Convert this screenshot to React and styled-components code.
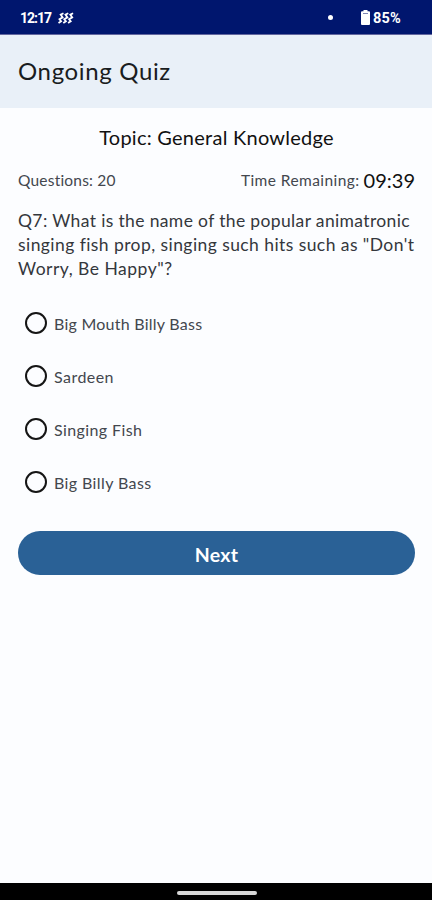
import React, { useState } from 'react';
import styled, { createGlobalStyle } from 'styled-components';

const GlobalStyle = createGlobalStyle`
    *{
        box-sizing:border-box;
    }
    body{
        margin:0;
        background:#fcfdff;
    }
`;

const Screen = styled.div`
    display:flex;
    flex-direction:column;
    width:432px;
    height:900px;
    background:#fcfdff;
    color:#191c20;
    font-family:Lato, "Open Sans", sans-serif;
    overflow:hidden;
`;

const StatusBar = styled.div`
    display:flex;
    align-items:center;
    flex:none;
    height:35px;
    padding:1px 31px 0 20px;
    background:#00166e;
    border-bottom:1px solid #63679f;
    color:#fff;
    font-family:Roboto, sans-serif;
    font-size:14px;
    font-weight:700;
`;

const Clock = styled.span`
    margin-right:7px;
    letter-spacing:-1px;
`;

const Dot = styled.span`
    width:5px;
    height:5px;
    margin-left:auto;
    margin-right:28px;
    border-radius:50%;
    background:#fff;
`;

const Percent = styled.span`
    margin-left:3px;
    padding-top:1px;
    font-size:14.5px;
    letter-spacing:0.2px;
`;

const Header = styled.header`
    display:flex;
    align-items:center;
    flex:none;
    height:73px;
    padding:0 18px 2px;
    background:#e9f0f8;
`;

const Title = styled.h1`
    margin:0;
    font-size:24px;
    font-weight:400;
    line-height:32px;
    letter-spacing:0.65px;
`;

const Content = styled.main`
    display:flex;
    flex-direction:column;
    flex:1;
    padding:15px 17px 0 18px;
`;

const Topic = styled.h2`
    margin:0;
    color:#111;
    font-size:20px;
    font-weight:400;
    line-height:28px;
    letter-spacing:0.25px;
    text-align:center;
`;

const Info = styled.div`
    display:flex;
    justify-content:space-between;
    align-items:center;
    height:28px;
    margin-top:15px;
`;

const Label = styled.span`
    color:#43474e;
    font-size:${props => props.$size || '16px'};
    line-height:24px;
    letter-spacing:${props => props.$spacing};
    white-space:pre;
`;

const Timer = styled.span`
    margin-left:4px;
    color:#111;
    font-size:20px;
    line-height:24px;
`;

const Remaining = styled.div`
    display:flex;
    align-items:center;
`;

const Question = styled.p`
    margin:15px 0 0;
    color:#34373c;
    font-size:17.5px;
    line-height:24px;
    white-space:nowrap;
`;

const Line = styled.span`
    display:block;
    letter-spacing:${props => props.$spacing};
`;

const Options = styled.div`
    display:flex;
    flex-direction:column;
    margin-top:16px;
`;

const Option = styled.label`
    display:flex;
    align-items:center;
    height:53px;
    padding-left:7px;
    cursor:pointer;
`;

const Radio = styled.input`
    appearance:none;
    width:22px;
    height:22px;
    margin:0 7px 1px 0;
    border:2px solid #151515;
    border-radius:50%;

    &:checked{
        box-shadow:inset 0 0 0 4px #fcfdff;
        background:#286196;
    }
`;

const NextButton = styled.button`
    height:44px;
    margin-top:22px;
    padding:2px 0 0;
    border:none;
    border-radius:22px;
    background:#2a6196;
    color:#fff;
    font-family:inherit;
    font-size:19.5px;
    font-weight:700;
    letter-spacing:0.3px;
`;

const NavBar = styled.div`
    display:flex;
    justify-content:center;
    align-items:center;
    flex:none;
    height:17px;
    background:#000;
`;

const Handle = styled.div`
    width:80px;
    height:4px;
    margin:2px 0 0 1px;
    border-radius:2px;
    background:#d8d8d8;
`;

const lines = [
    { text: 'Q7: What is the name of the popular animatronic', spacing: '0.36px' },
    { text: 'singing fish prop, singing such hits such as "Don\'t', spacing: '0.43px' },
    { text: 'Worry, Be Happy"?', spacing: '0.5px' },
];

const answers = [
    { text: 'Big Mouth Billy Bass', spacing: '0.25px' },
    { text: 'Sardeen', spacing: '0.45px' },
    { text: 'Singing Fish', spacing: '0.4px' },
    { text: 'Big Billy Bass', spacing: '0.4px' },
];

function WavesIcon() {
    return (
        <svg width="16" height="12" viewBox="0 0 16 12" fill="none" stroke="#fff" strokeWidth="1.8">
            <path d="M5.5 1.2 2.7 2.6 4.6 5.4 1.5 7.2 3.1 9.2 .5 11" />
            <path d="M10.3 1.2 7.5 2.6 9.4 5.4 6.3 7.2 7.9 9.2 5.3 11" />
            <path d="M15.1 1.2 12.3 2.6 14.2 5.4 11.1 7.2 12.7 9.2 10.1 11" />
        </svg>
    );
}

function BatteryIcon() {
    return (
        <svg width="9" height="15" viewBox="0 0 9 15">
            <path d="M2.5 0h4v1.2H8a1 1 0 0 1 1 1V14a1 1 0 0 1-1 1H1a1 1 0 0 1-1-1V2.2a1 1 0 0 1 1-1h1.5z" fill="#fff" />
            <path d="M2 3.5h5" stroke="#7d86b5" />
        </svg>
    );
}

export default function App() {
    const [selected, setSelected] = useState(null);

    return (
        <Screen>
            <GlobalStyle />
            <StatusBar>
                <Clock>12:17</Clock>
                <WavesIcon />
                <Dot />
                <BatteryIcon />
                <Percent>85%</Percent>
            </StatusBar>
            <Header>
                <Title>Ongoing Quiz</Title>
            </Header>
            <Content>
                <Topic>Topic: General Knowledge</Topic>
                <Info>
                    <Label $size="15.5px" $spacing="0.2px">Questions: 20</Label>
                    <Remaining>
                        <Label $size="15.5px" $spacing="0.43px">Time Remaining:</Label>
                        <Timer>09:39</Timer>
                    </Remaining>
                </Info>
                <Question>
                    {lines.map(line => (
                        <Line key={line.text} $spacing={line.spacing}>{line.text}</Line>
                    ))}
                </Question>
                <Options>
                    {answers.map(answer => (
                        <Option key={answer.text}>
                            <Radio
                                type="radio"
                                name="answer"
                                checked={selected === answer.text}
                                onChange={() => setSelected(answer.text)}
                            />
                            <Label $spacing={answer.spacing}>{answer.text}</Label>
                        </Option>
                    ))}
                </Options>
                <NextButton>Next</NextButton>
            </Content>
            <NavBar>
                <Handle />
            </NavBar>
        </Screen>
    );
}
